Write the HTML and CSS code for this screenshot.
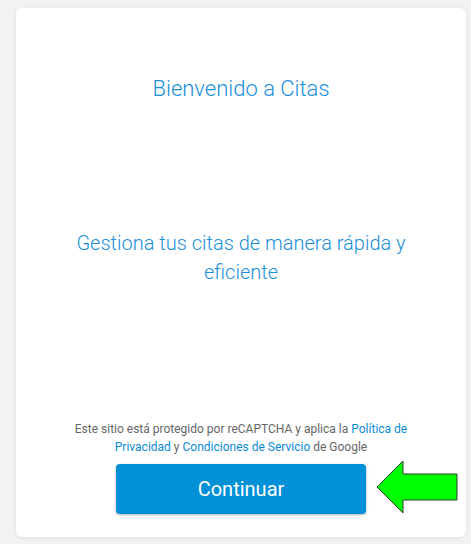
FILE: index.html
```html
<!DOCTYPE html>
<html lang="es">
<head>
<meta charset="utf-8">
<title>Bienvenido a Citas</title>
<link rel="stylesheet" href="styles.css">
</head>
<body>
<main class="card">
  <h1 class="title">Bienvenido a Citas</h1>
  <p class="subtitle">Gestiona tus citas de manera rápida y eficiente</p>
  <footer class="footer">
    <p class="legal">Este sitio está protegido por reCAPTCHA y aplica la <a href="#">Política de Privacidad</a> y <a href="#">Condiciones de Servicio</a> de Google</p>
    <button class="btn" type="button">Continuar</button>
  </footer>
  <svg class="arrow" width="84" height="54" viewBox="0 0 84 54" aria-hidden="true">
    <polygon points="1,27 27,1 27,14 81,14 81,40 27,40 27,53" fill="#00ff00" stroke="#2e3a2e" stroke-width="1"/>
  </svg>
</main>
</body>
</html>
```
FILE: styles.css
```css
* { box-sizing: border-box; }
html, body { height: 100%; }
body {
  margin: 0;
  padding: 8px 5px 7px 16px;
  background: #f2f2f2;
  font-family: Roboto, "Liberation Sans", Arial, sans-serif;
}
.card {
  position: relative;
  width: 450px;
  height: 529px;
  background: #fff;
  border-radius: 6px;
  box-shadow: 0 1px 4px rgba(0,0,0,0.08);
  padding: 68px 32px 23px;
  display: flex;
  flex-direction: column;
  align-items: center;
  text-align: center;
}
.title {
  margin: 0;
  font-size: 22px;
  font-weight: 300;
  line-height: 26px;
  color: #1a90d9;
}
.subtitle {
  margin: 127px 0 0;
  font-size: 20px;
  font-weight: 300;
  line-height: 29px;
  color: #1a90d9;
}
.footer {
  margin-top: auto;
  display: flex;
  flex-direction: column;
  align-items: center;
}
.legal {
  margin: 0;
  font-size: 12px;
  line-height: 18px;
  color: #666;
}
.legal a {
  color: #0a8ad6;
  text-decoration: none;
}
.btn {
  margin-top: 8px;
  width: 250px;
  height: 50px;
  border: none;
  border-radius: 4px;
  background: #0090d8;
  color: #fff;
  font-family: Roboto, "Liberation Sans", Arial, sans-serif;
  font-size: 20px;
  font-weight: 400;
  box-shadow: 0 1px 3px rgba(0,0,0,0.3);
}
.arrow {
  position: absolute;
  left: 360px;
  top: 452px;
}
```
